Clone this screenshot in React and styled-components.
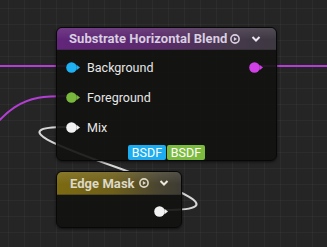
import React from "react";
import styled, { createGlobalStyle } from "styled-components";

const Global = createGlobalStyle`
  html, body { margin: 0; padding: 0; }
  body { width: 327px; height: 247px; overflow: hidden; background: #262626; font-family: Roboto, "Liberation Sans", sans-serif; }
`;

const Canvas = styled.div`
  position: relative;
  width: 327px;
  height: 247px;
  overflow: hidden;
  background-color: #252525;
  background-image:
    linear-gradient(to right, rgba(255,255,255,0.03) 1px, transparent 1px),
    linear-gradient(to bottom, rgba(255,255,255,0.03) 1px, transparent 1px);
  background-size: 16px 16px;
  background-position: 8px 8px;
`;

const Wires = styled.svg`
  position: absolute;
  left: 0;
  top: 0;
  width: 327px;
  height: 247px;
`;

const Node = styled.div`
  position: absolute;
  left: ${(p) => p.$x}px;
  top: ${(p) => p.$y}px;
  width: ${(p) => p.$w}px;
  box-sizing: border-box;
  border: 1px solid #080808;
  border-radius: 6px;
  background: rgba(18, 18, 17, 0.9);
  box-shadow: 0 1px 3px rgba(0,0,0,0.6);
  display: flex;
  flex-direction: column;
`;

const Header = styled.div`
  height: ${(p) => p.$h}px;
  box-sizing: border-box;
  display: flex;
  align-items: center;
  padding-left: ${(p) => p.$pl}px;
  border-radius: 5px 5px 0 0;
  background:
    linear-gradient(to bottom, rgba(255,255,255,0.10), rgba(255,255,255,0) 55%),
    ${(p) => p.$bg};
  border-bottom: 1px solid rgba(0,0,0,0.35);
`;

const Title = styled.span`
  font-size: 13px;
  font-weight: 700;
  color: ${(p) => p.$color};
  white-space: nowrap;
  letter-spacing: 0.05px;
`;

const PlayIcon = styled.svg`
  margin-left: ${(p) => p.$ml}px;
  flex: none;
`;

const Chevron = styled.svg`
  margin-left: ${(p) => p.$ml}px;
  flex: none;
`;

const Body = styled.div`
  display: flex;
  flex-direction: column;
  padding-top: ${(p) => p.$pt || 0}px;
`;

const Row = styled.div`
  height: ${(p) => p.$h}px;
  display: flex;
  align-items: center;
  justify-content: ${(p) => (p.$end ? "flex-end" : "space-between")};
  padding: 0 ${(p) => p.$pr || 12}px 0 9px;
`;

const InGroup = styled.div`
  display: flex;
  align-items: center;
`;

const PinLabel = styled.span`
  margin-left: 6px;
  font-size: 12.5px;
  color: #e6e6e6;
  white-space: nowrap;
`;

const Badges = styled.div`
  display: flex;
  justify-content: center;
  gap: 1px;
  margin-top: 3px;
`;

const Badge = styled.span`
  width: 38px;
  height: 15px;
  border-radius: 2px;
  background: ${(p) => p.$bg};
  color: #ffffff;
  font-size: 12.5px;
  line-height: 15px;
  text-align: center;
`;

function Pin({ color }) {
  return (
    <svg width="15" height="11" viewBox="0 0 15 11">
      <circle cx="5.5" cy="5.5" r="5.3" fill={color} />
      <polygon points="10.5,2.8 14,5.5 10.5,8.2" fill={color} />
    </svg>
  );
}

function Play({ ml, color }) {
  return (
    <PlayIcon $ml={ml} width="10" height="10" viewBox="0 0 10 10">
      <circle cx="5" cy="5" r="4.1" fill="none" stroke={color} strokeWidth="1.6" />
      <polygon points="3.9,3 7,5 3.9,7" fill={color} />
    </PlayIcon>
  );
}

function Down({ ml, color }) {
  return (
    <Chevron $ml={ml} width="10" height="8" viewBox="0 0 10 8">
      <polyline points="1.5,2 5,5.5 8.5,2" fill="none" stroke={color} strokeWidth="2" />
    </Chevron>
  );
}

export default function App() {
  return (
    <>
      <Global />
      <Canvas>
        <Wires viewBox="0 0 327 247">
          <path d="M -40 175 C 5 100, 25 96, 66 96" fill="none" stroke="#b33ed2" strokeWidth="2" />
          <path d="M 0 66 L 66 66" fill="none" stroke="#b33ed2" strokeWidth="2" />
          <path d="M 258 66 L 327 66" fill="none" stroke="#b33ed2" strokeWidth="2" />
          <path d="M 166 210 C 300 210, -58 127, 66 127" fill="none" stroke="#d6d6d6" strokeWidth="2" />
        </Wires>

        <Node $x={56} $y={27} $w={221}>
          <Header $h={22} $pl={12} $bg="linear-gradient(to right, #62257a 0%, #5b2a6c 45%, #45394b 80%, #3d3841 100%)">
            <Title $color="#d8cfe0">Substrate Horizontal Blend</Title>
            <Play ml={3} color="#d8cfe0" />
            <Down ml={11} color="#ece6f0" />
          </Header>
          <Body $pt={2}>
            <Row $h={30} $pr={12}>
              <InGroup>
                <Pin color="#1fb0f2" />
                <PinLabel>Background</PinLabel>
              </InGroup>
              <Pin color="#d040e6" />
            </Row>
            <Row $h={30}>
              <InGroup>
                <Pin color="#78b83c" />
                <PinLabel>Foreground</PinLabel>
              </InGroup>
            </Row>
            <Row $h={30}>
              <InGroup>
                <Pin color="#f2f2f2" />
                <PinLabel>Mix</PinLabel>
              </InGroup>
            </Row>
            <Badges>
              <Badge $bg="#1cacef">BSDF</Badge>
              <Badge $bg="#7cbb3f">BSDF</Badge>
            </Badges>
          </Body>
        </Node>

        <Node $x={56} $y={171} $w={126}>
          <Header $h={23} $pl={13} $bg="linear-gradient(to right, #7c6a12 0%, #6e5f1a 45%, #4a4530 80%, #3d3b33 100%)">
            <Title $color="#dcd8c8">Edge Mask</Title>
            <Play ml={4} color="#dcd8c8" />
            <Down ml={10} color="#ece8dc" />
          </Header>
          <Body>
            <Row $h={32} $end $pr={12}>
              <Pin color="#f2f2f2" />
            </Row>
          </Body>
        </Node>
      </Canvas>
    </>
  );
}
